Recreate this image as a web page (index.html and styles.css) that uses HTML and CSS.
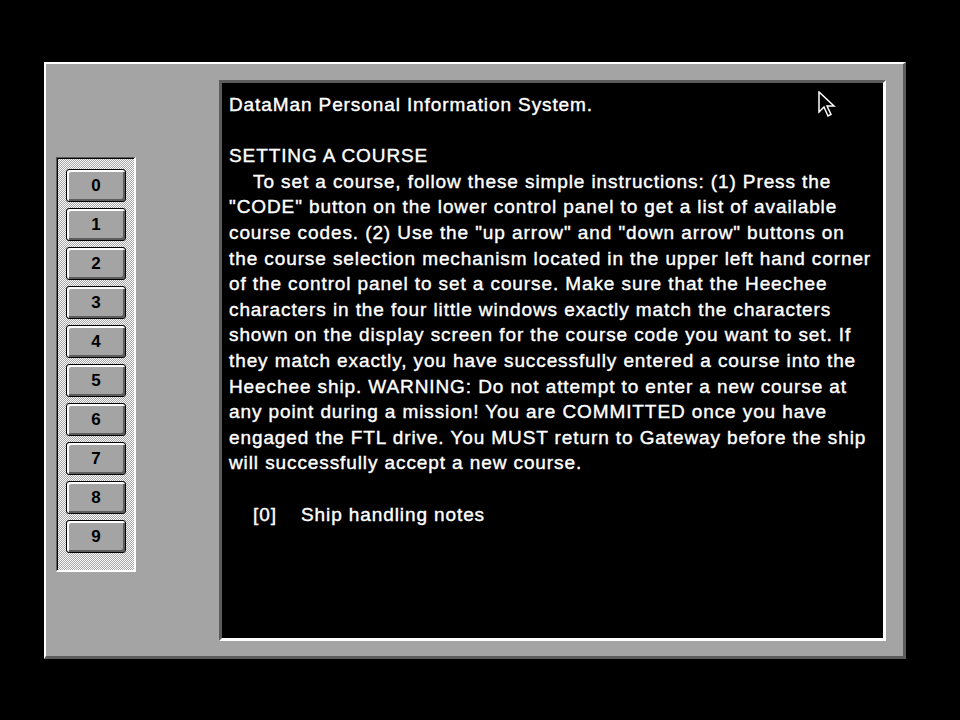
FILE: index.html
```html
<!DOCTYPE html>
<html>
<head>
<meta charset="utf-8">
<link rel="stylesheet" href="styles.css">
</head>
<body>
<div class="frame">
  <div class="keypad">
    <div class="key">0</div>
    <div class="key">1</div>
    <div class="key">2</div>
    <div class="key">3</div>
    <div class="key">4</div>
    <div class="key">5</div>
    <div class="key">6</div>
    <div class="key">7</div>
    <div class="key">8</div>
    <div class="key">9</div>
  </div>
  <div class="screen">
    <div class="ln">DataMan Personal Information System.</div>
    <div class="ln">&nbsp;</div>
    <div class="ln">SETTING A COURSE</div>
    <div class="ln indent">To set a course, follow these simple instructions: (1) Press the</div>
    <div class="ln">"CODE" button on the lower control panel to get a list of available</div>
    <div class="ln">course codes. (2) Use the "up arrow" and "down arrow" buttons on</div>
    <div class="ln">the course selection mechanism located in the upper left hand corner</div>
    <div class="ln">of the control panel to set a course. Make sure that the Heechee</div>
    <div class="ln">characters in the four little windows exactly match the characters</div>
    <div class="ln">shown on the display screen for the course code you want to set. If</div>
    <div class="ln">they match exactly, you have successfully entered a course into the</div>
    <div class="ln">Heechee ship. WARNING: Do not attempt to enter a new course at</div>
    <div class="ln">any point during a mission! You are COMMITTED once you have</div>
    <div class="ln">engaged the FTL drive. You MUST return to Gateway before the ship</div>
    <div class="ln">will successfully accept a new course.</div>
    <div class="ln">&nbsp;</div>
    <div class="ln indent link"><span class="code">[0]</span><span>Ship handling notes</span></div>
    <svg class="cursor" width="18" height="28" viewBox="0 0 18 28">
      <path d="M1 1 L1 21 L6 16 L10 25 L13 23.5 L9 15 L16 15 Z" fill="#000" stroke="#fff" stroke-width="1.5" stroke-linejoin="miter"/>
    </svg>
  </div>
</div>
</body>
</html>
```

FILE: styles.css
```css
html, body {
  margin: 0;
  padding: 0;
  background: #000;
}
body {
  width: 960px;
  height: 720px;
  padding: 62px 0 0 44px;
  box-sizing: border-box;
}
.frame {
  width: 862px;
  height: 597px;
  box-sizing: border-box;
  background: #a4a4a4;
  border-style: solid;
  border-width: 2px 3px 3px 2px;
  border-color: #ffffff #5c5c5c #5c5c5c #ffffff;
  padding: 16px 0 0 10px;
  display: flex;
  align-items: flex-start;
}
.keypad {
  margin-top: 77px;
  width: 80px;
  height: 415px;
  box-sizing: border-box;
  border-style: solid;
  border-width: 1px 2px 2px 1px;
  border-color: #5c5c5c #ffffff #ffffff #5c5c5c;
  box-shadow: inset 1px 1px 0 #000;
  background: repeating-conic-gradient(#ffffff 0 25%, #a4a4a4 0 50%) 0 0 / 2px 2px;
  padding: 11px 8px 0 9px;
  display: flex;
  flex-direction: column;
  gap: 6px;
}
.key {
  width: 60px;
  height: 33px;
  box-sizing: border-box;
  border: 1px solid #000;
  border-radius: 3px;
  background: #a4a4a4;
  box-shadow: inset 2px 2px 0 #ffffff, inset -2px -2px 0 #5c5c5c;
  display: flex;
  align-items: center;
  justify-content: center;
  font-family: "Liberation Sans", Arial, sans-serif;
  font-weight: bold;
  font-size: 17px;
  color: #000;
}
.screen {
  position: relative;
  margin-left: 83px;
  width: 667px;
  height: 561px;
  box-sizing: border-box;
  background: #000;
  border-style: solid;
  border-width: 3px;
  border-color: #5c5c5c #ffffff #ffffff #5c5c5c;
  padding: 9px 0 0 7px;
  color: #fff;
  font-family: "Liberation Sans", Arial, sans-serif;
  font-size: 19px;
  letter-spacing: 0.9px;
  -webkit-text-stroke: 0.4px #fff;
  line-height: 25.6px;
}
.ln {
  white-space: nowrap;
}
.indent {
  padding-left: 24px;
}
.link .code {
  display: inline-block;
  width: 48px;
}
.cursor {
  position: absolute;
  left: 596px;
  top: 8px;
}
```
